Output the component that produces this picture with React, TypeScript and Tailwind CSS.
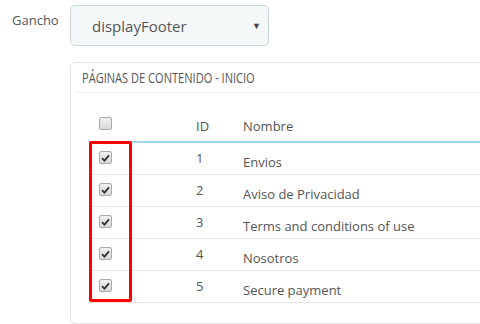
import React from 'react';

type Page = { id: number; name: string };

const pages: Page[] = [
  { id: 1, name: 'Envios' },
  { id: 2, name: 'Aviso de Privacidad' },
  { id: 3, name: 'Terms and conditions of use' },
  { id: 4, name: 'Nosotros' },
  { id: 5, name: 'Secure payment' },
];

const Box: React.FC<{ checked?: boolean }> = ({ checked }) => (
  <span className="flex h-[13px] w-[13px] items-center justify-center rounded-[2px] border border-[#a9a9a9] bg-gradient-to-b from-[#f0f0f0] to-[#d8d8d8]">
    {checked && (
      <svg width="9" height="8" viewBox="0 0 9 8">
        <path d="M1 4.2 L3.4 6.6 L8 1.4" fill="none" stroke="#333" strokeWidth="1.9" />
      </svg>
    )}
  </span>
);

const App: React.FC = () => {
  return (
    <div className="h-[324px] w-[480px] overflow-hidden bg-white font-['Open_Sans',sans-serif] text-[13px] text-[#555]">
      {/* Hook selector */}
      <div className="flex pt-[5px]">
        <div className="w-[70px] pl-[12px] pt-[6px] leading-[18px]">Gancho</div>
        <div className="flex h-[41px] w-[199px] items-center justify-between rounded-[5px] border border-[#c8d7dc] bg-[#f5f8f9] pl-[21px] pr-[7px]">
          <span className="text-[15px] leading-[20px] text-[#555]">displayFooter</span>
          <span className="text-[9px] text-[#444]">▼</span>
        </div>
      </div>

      {/* Pages panel */}
      <div className="ml-[70px] mt-[16px] h-[262px] w-[440px] rounded-[5px] border border-[#e4e4e4] px-[5px]">
        <div className="flex h-[30px] items-center border-b border-[#eee] pl-[6px]">
          <span className="origin-left scale-x-[0.79] whitespace-nowrap text-[14px] leading-[18px] text-[#555]">
            PÁGINAS DE CONTENIDO - INICIO
          </span>
        </div>

        <div className="relative ml-[13px]">
          <div className="flex h-[50px] border-b-2 border-[#a4d3ee]">
            <div className="w-[97px] pl-[10px] pt-[24px]">
              <Box />
            </div>
            <div className="w-[47px] pl-[10px] pt-[24px] leading-[18px]">ID</div>
            <div className="flex-1 pl-[10px] pt-[24px] leading-[18px]">Nombre</div>
          </div>
          {pages.map((p) => (
            <div key={p.id} className="flex h-[32px] border-b border-[#e6e6e6]">
              <div className="w-[97px] pl-[10px] pt-[8px]">
                <Box checked />
              </div>
              <div className="w-[47px] pl-[10px] pt-[6px] leading-[18px]">{p.id}</div>
              <div className="flex-1 pl-[10px] pt-[10px] leading-[18px]">{p.name}</div>
            </div>
          ))}
          {/* red highlight over the checkbox column */}
          <div className="absolute left-0 top-[48px] h-[161px] w-[43px] rounded-[2px] border-[3px] border-[#ff0000]" />
        </div>
      </div>
    </div>
  );
};

export default App;
